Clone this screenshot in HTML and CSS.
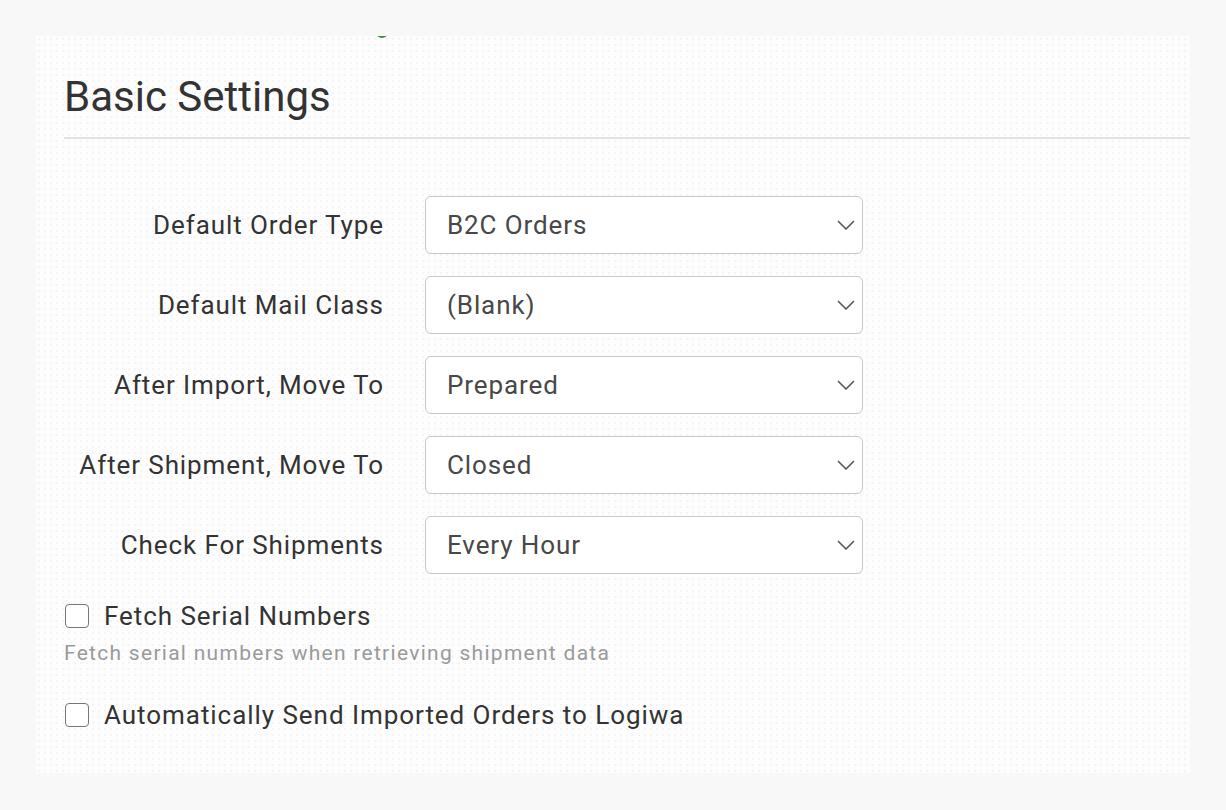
FILE: index.html
```html
<!DOCTYPE html>
<html lang="en">
<head>
<meta charset="utf-8">
<title>Basic Settings</title>
<link rel="stylesheet" href="styles.css">
</head>
<body>
<div class="card">
  <span class="status-dot"></span>
  <h2 class="card-title">Basic Settings</h2>
  <div class="form-grid">
    <label class="field-label">Default Order Type</label>
    <div class="select"><span>B2C Orders</span><svg class="chev" viewBox="0 0 18 10"><path d="M1 1l8 8 8-8"/></svg></div>
    <label class="field-label">Default Mail Class</label>
    <div class="select"><span>(Blank)</span><svg class="chev" viewBox="0 0 18 10"><path d="M1 1l8 8 8-8"/></svg></div>
    <label class="field-label">After Import, Move To</label>
    <div class="select"><span>Prepared</span><svg class="chev" viewBox="0 0 18 10"><path d="M1 1l8 8 8-8"/></svg></div>
    <label class="field-label">After Shipment, Move To</label>
    <div class="select"><span>Closed</span><svg class="chev" viewBox="0 0 18 10"><path d="M1 1l8 8 8-8"/></svg></div>
    <label class="field-label">Check For Shipments</label>
    <div class="select"><span>Every Hour</span><svg class="chev" viewBox="0 0 18 10"><path d="M1 1l8 8 8-8"/></svg></div>
  </div>
  <div class="check-row first"><span class="box"></span><span class="check-label">Fetch Serial Numbers</span></div>
  <p class="help">Fetch serial numbers when retrieving shipment data</p>
  <div class="check-row second"><span class="box"></span><span class="check-label">Automatically Send Imported Orders to Logiwa</span></div>
</div>
</body>
</html>
```
FILE: styles.css
```css
html, body { margin: 0; padding: 0; }
body {
  background: #f8f8f8;
  font-family: Roboto, "Noto Sans", Arial, sans-serif;
  color: #333;
  padding: 36px 36px 0 36px;
}
.card {
  position: relative;
  width: 1154px;
  box-sizing: border-box;
  padding: 36px 0 43px 28px;
  background-color: #fdfdfd;
  background-image: radial-gradient(circle, #f4f4f4 1px, transparent 1.4px);
  background-size: 6px 6px;
}
.status-dot {
  position: absolute;
  left: 340px;
  top: -10px;
  width: 12px;
  height: 12px;
  border-radius: 50%;
  background: #3d8b3d;
  clip-path: inset(10px 0 0 0);
}
.card-title {
  margin: 0;
  font-size: 42px;
  line-height: 50px;
  font-weight: 400;
  color: #333;
  padding-bottom: 15px;
  border-bottom: 2px solid #e2e2e2;
}
.form-grid {
  display: grid;
  grid-template-columns: 319px 438px;
  column-gap: 42px;
  row-gap: 22px;
  align-items: center;
  margin-top: 57px;
}
.field-label {
  text-align: right;
  font-size: 26px;
  letter-spacing: 0.9px;
  margin-right: -0.9px;
  color: #333;
}
.select {
  height: 58px;
  box-sizing: border-box;
  border: 1.5px solid #c8c8c8;
  border-radius: 6px;
  background: #fff;
  display: flex;
  align-items: center;
  justify-content: space-between;
  padding: 0 7px 0 21px;
  font-size: 26px;
  letter-spacing: 0.9px;
  color: #484848;
}
.chev {
  width: 18px;
  height: 10px;
  fill: none;
  stroke: #555;
  stroke-width: 1.6;
}
.check-row {
  display: flex;
  align-items: center;
  gap: 15px;
  height: 30px;
}
.check-row.first { margin-top: 27px; }
.check-row.second { margin-top: 35px; }
.box {
  width: 24px;
  height: 24px;
  box-sizing: border-box;
  border: 1.5px solid #777;
  border-radius: 4px;
  background: #fff;
  margin-left: 1px;
}
.check-label {
  font-size: 26px;
  letter-spacing: 0.95px;
  line-height: 30px;
  color: #333;
}
.help {
  margin: 10px 0 0 0;
  font-size: 21px;
  line-height: 24px;
  letter-spacing: 1.28px;
  color: #9a9a9a;
}
```
